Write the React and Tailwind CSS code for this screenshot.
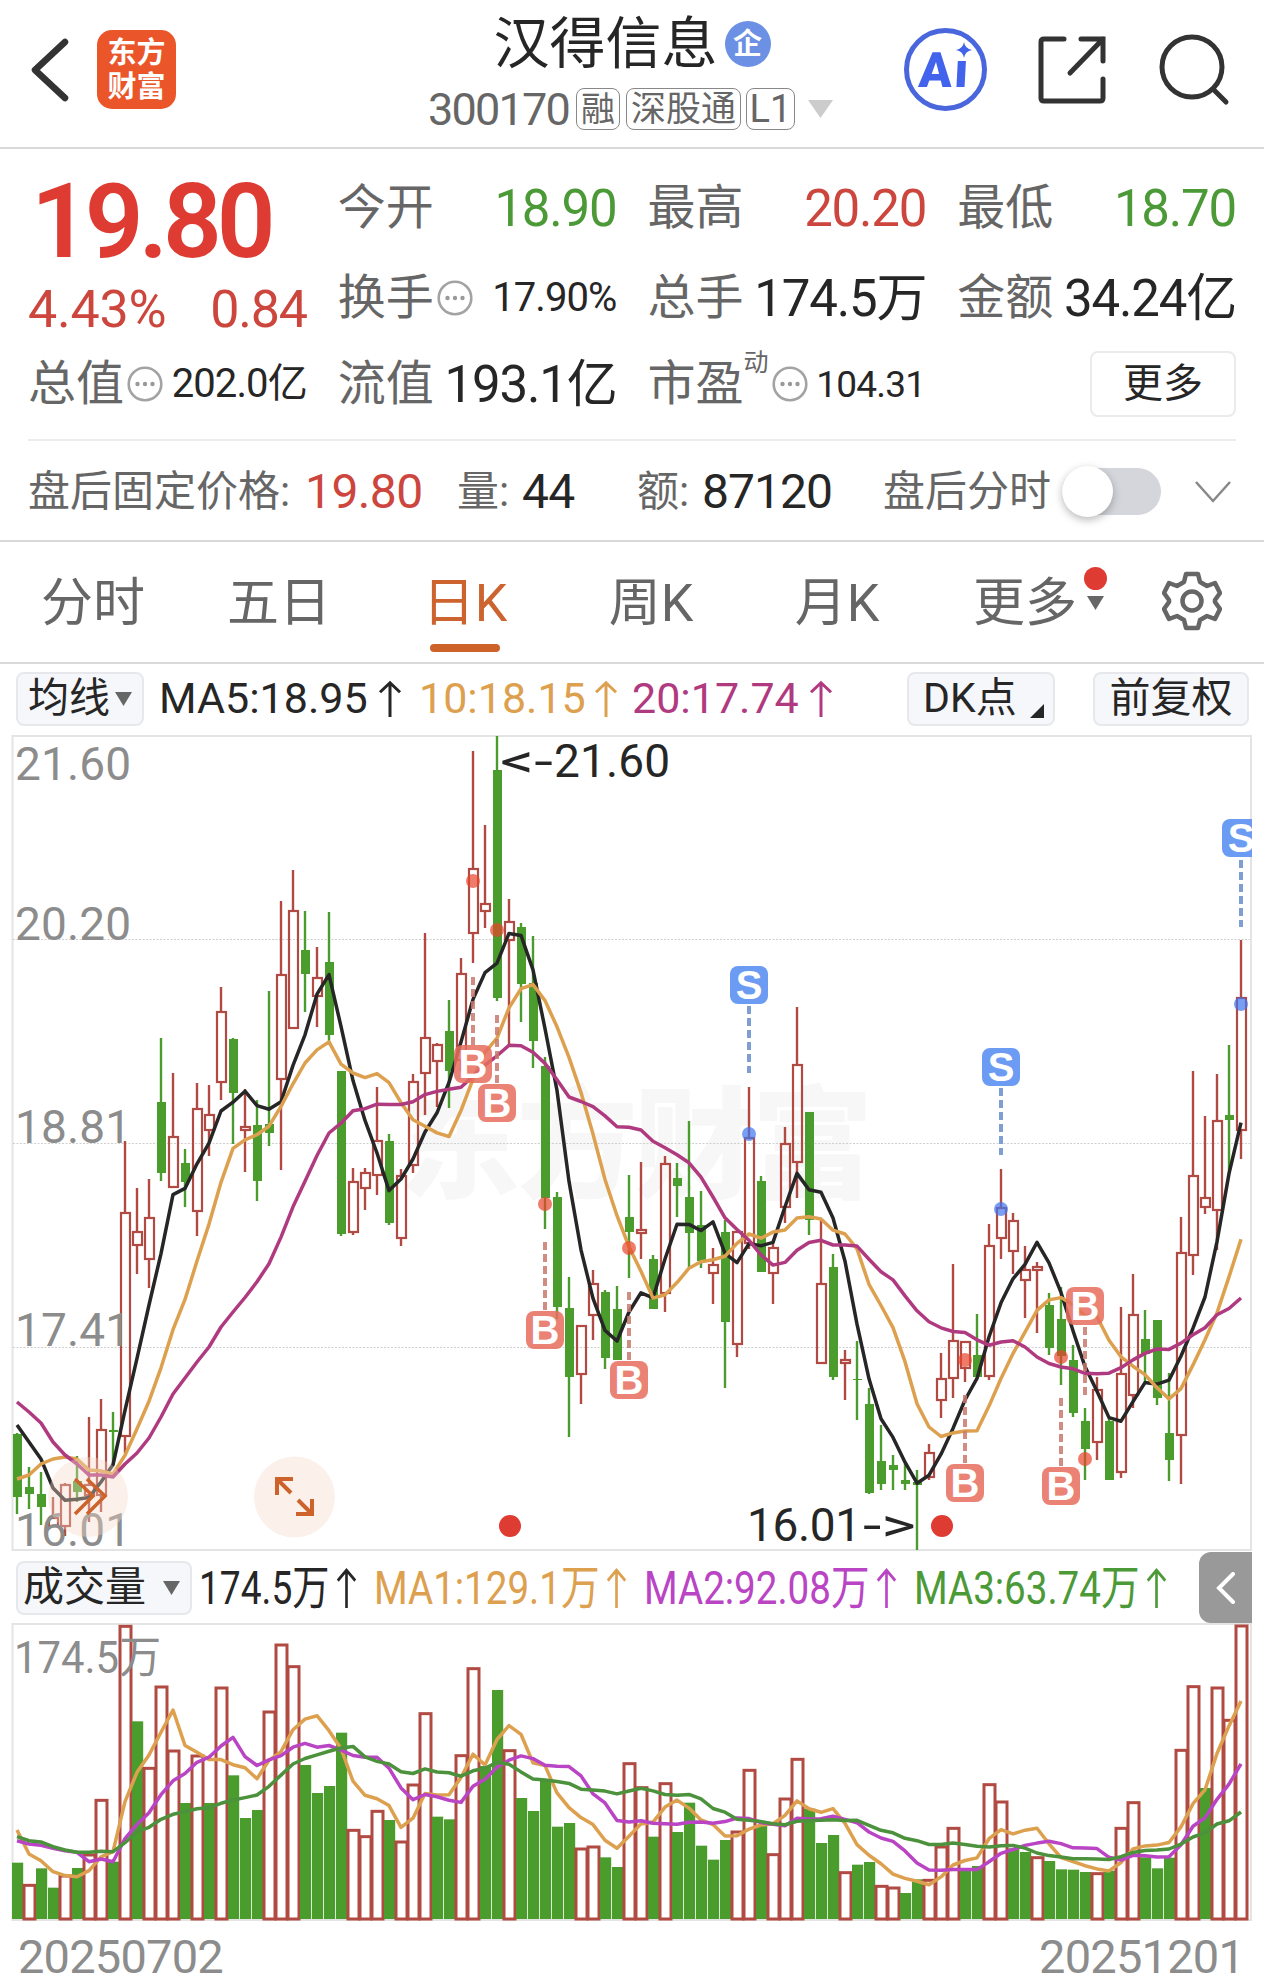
import React from 'react';

// [high, body top, body bottom, low, close above open, volume top]
const CANDLES = [
  [1433, 1434, 1497, 1514, 0, 968],
  [1467, 1487, 1494, 1509, 0, 1033],
  [1472, 1494, 1507, 1525, 0, 985],
  [1497, 1518, 1526, 1526, 1, 1043],
  [1483, 1485, 1526, 1536, 1, 1005],
  [1456, 1481, 1492, 1502, 0, 984],
  [1417, 1485, 1495, 1522, 1, 942],
  [1399, 1430, 1495, 1512, 1, 778],
  [1412, 1430, 1432, 1465, 0, 965],
  [1141, 1213, 1436, 1453, 1, 256],
  [1188, 1232, 1245, 1274, 1, 544],
  [1179, 1218, 1259, 1288, 1, 682],
  [1038, 1102, 1173, 1181, 0, 438],
  [1073, 1137, 1187, 1187, 1, 630],
  [1149, 1163, 1182, 1207, 0, 789],
  [1083, 1109, 1211, 1236, 1, 645],
  [1085, 1115, 1130, 1156, 1, 789],
  [987, 1012, 1082, 1100, 1, 441],
  [1038, 1039, 1093, 1144, 0, 706],
  [1089, 1127, 1130, 1172, 1, 834],
  [1100, 1125, 1181, 1201, 0, 810],
  [991, 1124, 1133, 1146, 0, 513],
  [901, 975, 1079, 1170, 1, 312],
  [870, 911, 1028, 1028, 1, 377],
  [911, 950, 974, 1012, 0, 675],
  [947, 978, 996, 1027, 1, 759],
  [912, 962, 1035, 1042, 0, 738],
  [1071, 1071, 1234, 1236, 0, 578],
  [1168, 1182, 1232, 1235, 1, 868],
  [1168, 1173, 1188, 1210, 1, 887],
  [1087, 1141, 1175, 1195, 1, 811],
  [1134, 1141, 1223, 1225, 0, 840],
  [1169, 1176, 1238, 1246, 1, 903],
  [1074, 1082, 1165, 1173, 1, 732],
  [933, 1038, 1073, 1115, 1, 518],
  [1043, 1045, 1061, 1107, 1, 830],
  [1000, 1031, 1071, 1108, 0, 838],
  [958, 974, 1060, 1071, 1, 644],
  [751, 869, 933, 963, 1, 383],
  [825, 904, 911, 928, 1, 678],
  [736, 770, 998, 1001, 0, 450],
  [899, 922, 940, 1045, 1, 629],
  [923, 927, 984, 1022, 0, 774],
  [936, 983, 1041, 1068, 0, 813],
  [1057, 1066, 1198, 1229, 0, 718],
  [1192, 1197, 1307, 1319, 0, 860],
  [1277, 1308, 1377, 1437, 0, 849],
  [1326, 1326, 1374, 1404, 1, 924],
  [1270, 1284, 1315, 1340, 1, 918],
  [1290, 1292, 1358, 1369, 0, 952],
  [1286, 1309, 1360, 1360, 0, 981],
  [1175, 1217, 1232, 1278, 0, 668],
  [1162, 1230, 1233, 1259, 1, 740],
  [1255, 1259, 1309, 1309, 0, 890],
  [1156, 1164, 1293, 1312, 1, 728],
  [1163, 1178, 1186, 1217, 0, 876],
  [1121, 1197, 1233, 1267, 0, 788],
  [1191, 1225, 1261, 1268, 0, 917],
  [1248, 1265, 1273, 1304, 1, 959],
  [1220, 1232, 1322, 1388, 0, 900],
  [1232, 1232, 1344, 1357, 1, 873],
  [1087, 1138, 1243, 1249, 1, 688],
  [1176, 1181, 1272, 1272, 0, 855],
  [1242, 1248, 1273, 1304, 1, 941],
  [1127, 1144, 1207, 1223, 1, 774],
  [1007, 1065, 1162, 1198, 1, 655],
  [1112, 1112, 1220, 1235, 0, 806],
  [1220, 1284, 1363, 1363, 1, 909],
  [1254, 1267, 1377, 1380, 0, 885],
  [1350, 1360, 1363, 1400, 1, 995],
  [1341, 1379, 1380, 1420, 0, 974],
  [1388, 1404, 1493, 1494, 0, 966],
  [1425, 1461, 1484, 1490, 0, 1036],
  [1455, 1465, 1470, 1490, 0, 1041],
  [1462, 1480, 1484, 1490, 0, 1059],
  [1470, 1482, 1485, 1550, 0, 1018],
  [1444, 1453, 1477, 1480, 1, 1018],
  [1353, 1379, 1400, 1418, 1, 918],
  [1264, 1341, 1378, 1398, 1, 862],
  [1342, 1342, 1368, 1382, 1, 992],
  [1314, 1355, 1377, 1377, 0, 978],
  [1224, 1246, 1376, 1380, 1, 731],
  [1169, 1208, 1238, 1259, 1, 783],
  [1213, 1221, 1251, 1274, 1, 925],
  [1246, 1270, 1280, 1318, 1, 936],
  [1262, 1267, 1270, 1333, 1, 950],
  [1293, 1305, 1348, 1355, 0, 963],
  [1287, 1319, 1356, 1385, 0, 988],
  [1345, 1360, 1413, 1417, 0, 989],
  [1408, 1421, 1449, 1480, 0, 996],
  [1377, 1390, 1442, 1460, 1, 998],
  [1417, 1421, 1480, 1480, 0, 992],
  [1307, 1374, 1472, 1478, 1, 862],
  [1274, 1315, 1395, 1408, 1, 785],
  [1310, 1339, 1354, 1383, 0, 952],
  [1320, 1320, 1398, 1405, 0, 985],
  [1373, 1433, 1460, 1481, 0, 953],
  [1217, 1253, 1435, 1484, 1, 628],
  [1071, 1176, 1255, 1275, 1, 437],
  [1116, 1198, 1207, 1214, 1, 744],
  [1074, 1121, 1210, 1250, 1, 441],
  [1045, 1115, 1120, 1174, 0, 538],
  [940, 998, 1130, 1159, 1, 255],
];

// Averages for the days before the window is full
const LEAD = {
  ma5: [1425, 1442, 1459, 1488],
  ma10: [1479, 1475, 1464, 1459, 1457, 1459, 1470, 1471, 1474],
  ma20: [1402, 1412, 1423, 1442, 1455, 1464, 1475, 1475, 1477, 1464, 1453, 1438, 1417, 1394, 1378, 1362, 1347, 1327, 1312],
  vol5: [870, 942, 962, 995],
  vol10: [902, 912, 916, 925, 932, 937, 965, 957, 965],
  vol20: [890, 902, 906, 920, 930, 937, 937, 934, 935, 908, 875, 862, 838, 823, 815, 806, 803, 790, 780],
};

const SIGNALS = [
  { type: 'B', day: 38, box: 1064, dot: 881, from: 977, to: 1045 },
  { type: 'B', day: 40, box: 1103, dot: 930, from: 1015, to: 1083 },
  { type: 'B', day: 44, box: 1330, dot: 1204, from: 1242, to: 1310 },
  { type: 'B', day: 51, box: 1380, dot: 1248, from: 1292, to: 1360 },
  { type: 'S', day: 61, box: 985, dot: 1134, from: 1006, to: 1073 },
  { type: 'B', day: 79, box: 1483, dot: 1360, from: 1395, to: 1463 },
  { type: 'S', day: 82, box: 1067, dot: 1209, from: 1088, to: 1155 },
  { type: 'B', day: 87, box: 1486, dot: 1357, from: 1398, to: 1466 },
  { type: 'B', day: 89, box: 1306, dot: 1459, from: 1327, to: 1395 },
  { type: 'S', day: 102, box: 838, dot: 1004, from: 860, to: 927 },
];

const RED = '#b04a42';
const GREEN = '#4a9c2d';

const xOf = (i) => 17 + i * 12;
const closes = CANDLES.map((c) => (c[4] ? c[1] : c[2]));
const volumes = CANDLES.map((c) => 1540 + c[5] / 3);

const average = (values, span, lead) =>
  values
    .map((_, i) => {
      const y = i < span - 1 ? lead[i] : values.slice(i - span + 1, i + 1).reduce((a, b) => a + b, 0) / span;
      return `${xOf(i)},${y.toFixed(1)}`;
    })
    .join(' ');

const volLead = (list) => list.map((v) => 1540 + v / 3);

const Line = ({ points, color }) => (
  <polyline points={points} fill="none" stroke={color} strokeWidth="3.500" strokeLinejoin="round" />
);

const UpArrow = ({ className }) => (
  <svg viewBox="0 0 24 40" preserveAspectRatio="none" className={className} fill="none" stroke="currentColor" strokeWidth="3">
    <path d="M12 39V3M2 13L12 3L22 13" />
  </svg>
);

const Caret = ({ className }) => (
  <svg viewBox="0 0 16 14" preserveAspectRatio="none" className={className} fill="currentColor">
    <path d="M0 0H16L8 14Z" />
  </svg>
);

const InfoDots = () => (
  <svg viewBox="0 0 36 36" className="ml-[3px] size-9 shrink-0">
    <circle cx="18" cy="18" r="16.3" fill="none" stroke="#a3a3a3" strokeWidth="2.6" />
    <circle cx="10.5" cy="18" r="2.2" fill="#999" />
    <circle cx="18" cy="18" r="2.2" fill="#999" />
    <circle cx="25.5" cy="18" r="2.2" fill="#999" />
  </svg>
);

const Header = () => (
  <header className="flex h-[149px] border-b-2 border-[#d9d9d9]">
    <div className="flex w-[428px] items-center pb-2 pl-[28px]">
      <svg viewBox="0 0 44 66" className="h-[66px] w-[44px]" fill="none" stroke="#333" strokeWidth="6.5" strokeLinecap="round">
        <path d="M37 5L7 33L37 61" strokeLinejoin="round" />
      </svg>
      <div className="ml-[25px] flex size-[79px] flex-col items-center justify-center rounded-[15px] bg-[#ea5529] text-[29px] leading-[34px] font-bold text-white">
        <span>东方</span>
        <span>财富</span>
      </div>
    </div>
    <div className="flex w-[405px] flex-col items-center">
      <div className="mt-[13px] flex h-[62px] items-center gap-[7px] pl-[3px]">
        <span className="text-[56px] leading-[62px] text-[#262626]">汉得信息</span>
        <span className="flex size-[46px] items-center justify-center rounded-full bg-[#6b90e4] text-[29px] leading-none font-bold text-white">企</span>
      </div>
      <div className="mt-[9px] flex h-[50px] w-[405px] items-center text-[#666]">
        <span className="w-[148px] text-[45px] leading-none tracking-[-1.8px]">300170</span>
        <span className="flex h-[42px] w-[44px] items-center justify-center rounded-[8px] border-[1.5px] border-[#888] text-[34px] leading-none">融</span>
        <span className="ml-[6px] flex h-[42px] w-[115px] items-center justify-center rounded-[8px] border-[1.5px] border-[#888] text-[35px] leading-none">深股通</span>
        <span className="ml-[5px] flex h-[42px] w-[49px] items-center justify-center rounded-[8px] border-[1.5px] border-[#888] text-[38px] leading-none">L1</span>
        <Caret className="ml-[13px] h-[18px] w-[25px] text-[#ccc]" />
      </div>
    </div>
    <div className="flex flex-1 items-center pb-2 pl-[71px]">
      <div className="relative flex size-[83px] items-center justify-center rounded-full border-[5px] border-[#4a66dc] text-[49px] leading-none font-black text-[#4263eb]">
        <span className="-skew-x-3 pt-[2px] pr-1">A<span className="ml-[2px]">ı</span></span>
        <svg viewBox="0 0 14 14" className="absolute top-[9px] left-[47px] size-[16px]" fill="currentColor">
          <path d="M7 0Q8 6 14 7Q8 8 7 14Q6 8 0 7Q6 6 7 0Z" />
        </svg>
      </div>
      <svg viewBox="0 0 70 70" className="ml-[50px] size-[70px]" fill="none" stroke="#333" strokeWidth="5" strokeLinecap="round">
        <path d="M27 4H7Q4 4 4 7V63Q4 66 7 66H63Q66 66 66 63V44" />
        <path d="M44 4H66V26M66 4L33 38" />
      </svg>
      <svg viewBox="0 0 72 72" className="ml-[51px] size-[72px]" fill="none" stroke="#333" strokeWidth="5">
        <circle cx="34" cy="33" r="30" />
        <path d="M55 55L68 68" strokeLinecap="round" />
      </svg>
    </div>
  </header>
);

const Cell = ({ label, value, color, dots, small }) => (
  <div className="flex h-[90px] items-center whitespace-nowrap">
    <span className="text-[48px] leading-none text-[#666]">{label}</span>
    {dots && <InfoDots />}
    <span className={`ml-auto leading-none ${small ? 'text-[40px] tracking-[-0.9px]' : 'text-[51px] tracking-[-1.2px]'} ${color || 'text-[#262626]'}`}>
      {value}
    </span>
  </div>
);

const Quote = () => (
  <section className="mx-7 h-[292px] border-b-2 border-[#ececec] pt-[14px]">
    <div className="grid h-[179px] grid-cols-4 gap-x-[31px]">
      <div className="flex flex-col text-[#de3b33]">
        <span className="h-[114px] pl-[3px] text-[103px] leading-[118px] font-semibold tracking-[-5px]">19.80</span>
        <div className="flex h-[66px] items-center justify-between text-[52px] leading-none text-[#cc463e]">
          <span className="tracking-[-0.2px]">4.43%</span>
          <span className="tracking-[-1.2px]">0.84</span>
        </div>
      </div>
      <div>
        <Cell label="今开" value="18.90" color="text-[#4c9a37]" />
        <Cell label="换手" value="17.90%" dots small />
      </div>
      <div>
        <Cell label="最高" value="20.20" color="text-[#cc463e]" />
        <Cell label="总手" value="174.5万" />
      </div>
      <div>
        <Cell label="最低" value="18.70" color="text-[#4c9a37]" />
        <Cell label="金额" value="34.24亿" />
      </div>
    </div>
    <div className="-mt-[3px] grid grid-cols-4 gap-x-[31px]">
      <Cell label="总值" value="202.0亿" dots small />
      <Cell label="流值" value="193.1亿" />
      <div className="flex h-[90px] items-center whitespace-nowrap text-[#666]">
        <span className="text-[48px] leading-none">市盈</span>
        <span className="mb-[44px] text-[25px] leading-none">动</span>
        <InfoDots />
        <span className="ml-auto pr-px text-[37px] leading-none tracking-[-0.8px] text-[#262626]">104.31</span>
      </div>
      <div className="flex h-[90px] items-center justify-end">
        <button className="h-[66px] w-[146px] rounded-[8px] border-2 border-[#e9ebec] text-[40px] leading-none text-[#262626]">更多</button>
      </div>
    </div>
  </section>
);

const AfterHours = () => (
  <section className="flex h-[101px] items-center border-b-2 border-[#d9d9d9] pt-[2px] pl-[28px] text-[42px] leading-none whitespace-nowrap text-[#666]">
    <span className="w-[277px]">盘后固定价格:</span>
    <span className="w-[152px] text-[48px] tracking-[-0.6px] text-[#cc463e]">19.80</span>
    <span className="w-[65px]">量:</span>
    <span className="w-[115px] text-[48px] tracking-[-0.8px] text-[#262626]">44</span>
    <span className="w-[65px]">额:</span>
    <span className="w-[181px] text-[48px] tracking-[-1px] text-[#262626]">87120</span>
    <span className="w-[179px]">盘后分时</span>
    <span className="flex h-[47px] w-[99px] items-center rounded-full bg-[#d4d6dc]">
      <span className="size-[51px] rounded-full bg-white shadow-[0_3px_8px_rgba(0,0,0,0.28)]" />
    </span>
    <svg viewBox="0 0 36 22" className="ml-[34px] h-[22px] w-[36px]" fill="none" stroke="#888" strokeWidth="2.5">
      <path d="M1 1L18 20L35 1" />
    </svg>
  </section>
);

const TABS = ['分时', '五日', '日K', '周K', '月K'];

const Tabs = () => (
  <nav className="flex h-[122px] border-b-2 border-[#d9d9d9] text-[52px] text-[#666]">
    {TABS.map((tab) => (
      <div key={tab} className={`flex w-[186px] flex-col items-center pt-[19px] leading-[86px] ${tab === '日K' ? 'text-[#cd6430]' : ''}`}>
        {tab}
        {tab === '日K' && <span className="-mt-[3px] h-[8px] w-[70px] rounded-full bg-[#cd622b]" />}
      </div>
    ))}
    <div className="flex w-[232px] pt-[19px] pl-[43px] leading-[86px]">
      更多
      <div className="ml-[6px] flex w-[24px] flex-col items-center pt-[6px]">
        <span className="size-[23px] rounded-full bg-[#de3b33]" />
        <Caret className="mt-[6px] h-[14px] w-[17px] text-[#666]" />
      </div>
    </div>
    <svg viewBox="0 0 60 60" className="mt-[29px] size-[60px]" fill="none" stroke="#666" strokeWidth="4.5" strokeLinejoin="round">
      <path d="M24 3H36L38 11L45 15L53 12L58 22L53 29V31L58 38L53 48L45 45L38 49L36 57H24L22 49L15 45L7 48L2 38L7 31V29L2 22L7 12L15 15L22 11Z" />
      <circle cx="30" cy="30" r="9.5" />
    </svg>
  </nav>
);

const Indicators = () => (
  <div className="flex h-[71px] items-center pb-[2px] pl-4 text-[43px] leading-none whitespace-nowrap">
    <button className="flex h-[54px] w-[128px] items-center justify-center gap-[5px] rounded-[8px] border-2 border-[#e6e8eb] bg-[#f6f7fa] text-[41px] text-[#262626]">
      均线
      <Caret className="h-[14px] w-[17px] text-[#666]" />
    </button>
    <span className="ml-[15px] flex w-[260px] items-center text-[#262626]">
      <span className="w-[219px]">MA5:18.95</span>
      <UpArrow className="h-[38px] w-[24px]" />
    </span>
    <span className="flex w-[213px] items-center text-[#dda04f]">
      <span className="w-[175px]">10:18.15</span>
      <UpArrow className="h-[38px] w-[24px]" />
    </span>
    <span className="flex w-[275px] items-center text-[#b03a80]">
      <span className="w-[177px]">20:17.74</span>
      <UpArrow className="h-[38px] w-[24px]" />
    </span>
    <button className="flex h-[54px] w-[148px] items-center rounded-[8px] border-2 border-[#e6e8eb] bg-[#f6f7fa] pl-[14px] text-[41px] text-[#262626]">
      DK点
      <svg viewBox="0 0 14 14" className="mt-[25px] ml-[13px] size-[14px]" fill="currentColor">
        <path d="M14 0V14H0Z" />
      </svg>
    </button>
    <button className="ml-[38px] h-[54px] w-[156px] rounded-[8px] border-2 border-[#e6e8eb] bg-[#f6f7fa] text-[41px] text-[#262626]">前复权</button>
  </div>
);

const AXIS = [
  ['21.60', 780],
  ['20.20', 940],
  ['18.81', 1143],
  ['17.41', 1346],
  ['16.01', 1546],
];

const PriceChart = () => (
  <svg viewBox="0 735 1264 817" className="block h-[817px] w-[1264px]">
    <text x="399" y="1188" fontSize="121" fontWeight="900" fill="#f7f7f7" textLength="474">东方财富</text>
    <rect x="12.5" y="736" width="1238.5" height="814" fill="none" stroke="#e4e4e4" strokeWidth="2" />
    {[939.5, 1143.5, 1347.5].map((y) => (
      <line key={y} x1="13" x2="1250" y1={y} y2={y} stroke="#cfcfcf" strokeDasharray="2 1.5" />
    ))}
    {CANDLES.map(([high, top, bottom, low, up], i) => {
      const x = xOf(i);
      return up ? (
        <g key={i} fill={RED}>
          <rect x={x - 1.2} y={high} width="2.400" height={Math.max(0, top - high)} />
          <rect x={x - 1.2} y={bottom} width="2.400" height={Math.max(0, low - bottom)} />
          <rect x={x - 4} y={top} width="9" height={bottom - top} fill="none" stroke={RED} strokeWidth="2.200" />
        </g>
      ) : (
        <g key={i} fill={GREEN}>
          <rect x={x - 1.2} y={high} width="2.400" height={low - high} />
          <rect x={x - 4} y={top} width="9" height={bottom - top} />
        </g>
      );
    })}
    <Line points={average(closes, 5, LEAD.ma5)} color="#262626" />
    <Line points={average(closes, 10, LEAD.ma10)} color="#dda04f" />
    <Line points={average(closes, 20, LEAD.ma20)} color="#b03a80" />

    {/* Buy / sell points */}
    <clipPath id="plot">
      <rect x="12" y="735" width="1240" height="816" />
    </clipPath>
    <g clipPath="url(#plot)">
      {SIGNALS.map(({ type, day, box, dot, from, to }) => {
        const x = xOf(day);
        const buy = type === 'B';
        return (
          <g key={day}>
            <line x1={x} x2={x} y1={from} y2={to} stroke={buy ? '#c9796b' : '#7d9fd2'} strokeOpacity={buy ? 0.85 : 1} strokeWidth="4" strokeDasharray="8 4" />
            <circle cx={x} cy={dot} r="7" fill={buy ? '#e8452b' : '#3f76f0'} fillOpacity="0.7" />
            <rect x={x - 19} y={box - 19} width="38" height="38" rx="8" fill={buy ? '#e66f5e' : '#6c9bf3'} fillOpacity={buy ? 0.86 : 1} />
            <text x={x} y={box + 14} textAnchor="middle" fontSize="40" fontWeight="700" fill="#fff" className="font-['Liberation_Sans']">{type}</text>
          </g>
        );
      })}
    </g>

    <g fontSize="46" fill="#8c8c8c">
      {AXIS.map(([label, y]) => (
        <text key={label} x="15" y={y} textLength="116">{label}</text>
      ))}
    </g>
    <g fontSize="46" fill="#262626">
      <text x="500" y="777" textLength="53" lengthAdjust="spacingAndGlyphs">&lt;-</text>
      <text x="554" y="777" textLength="116">21.60</text>
      <text x="747" y="1541" textLength="114">16.01</text>
      <text x="863" y="1541" textLength="53" lengthAdjust="spacingAndGlyphs">-&gt;</text>
    </g>
    <circle cx="510" cy="1526" r="11" fill="#de3b33" />
    <circle cx="942" cy="1526" r="11" fill="#de3b33" />

    {/* Floating chart controls */}
    <g fill="none" stroke="#cd622b" strokeWidth="4">
      <circle cx="88" cy="1497" r="40" fill="#f5d9c8" fillOpacity="0.38" stroke="none" />
      <path d="M75 1479L93 1496L75 1514M87 1479L105 1496L87 1514" strokeWidth="3.5" />
      <circle cx="294.500" cy="1497" r="40.500" fill="#fbf1ea" stroke="none" />
      <path d="M293 1479H277V1495M277 1479L291 1493M312 1499V1514H296M312 1514L298 1500" />
    </g>
  </svg>
);

const VolumeBar = () => (
  <div className="flex h-[71px] items-center pl-4 text-[47px] leading-none whitespace-nowrap">
    <button className="flex h-[54px] w-[176px] shrink-0 items-center gap-[17px] rounded-[8px] border-2 border-[#e6e8eb] bg-[#f6f7fa] pl-[5px] text-[41px] text-[#262626]">
      成交量
      <Caret className="h-[14px] w-[17px] text-[#666]" />
    </button>
    <span className="flex w-[182px] shrink-0 items-center pl-[7px] text-[#262626]">
      <span className="w-[137px]"><span className="inline-block origin-left scale-x-[0.79]">174.5万</span></span>
      <UpArrow className="h-[42px] w-[21px] shrink-0" />
    </span>
    <span className="flex w-[270px] shrink-0 items-center text-[#dda04f]">
      <span className="w-[232px]"><span className="inline-block origin-left scale-x-[0.82]">MA1:129.1万</span></span>
      <UpArrow className="h-[42px] w-[21px] shrink-0" />
    </span>
    <span className="flex w-[270px] shrink-0 items-center text-[#b944c4]">
      <span className="w-[232px]"><span className="inline-block origin-left scale-x-[0.82]">MA2:92.08万</span></span>
      <UpArrow className="h-[42px] w-[21px] shrink-0" />
    </span>
    <span className="flex w-[285px] shrink-0 items-center text-[#4c9a37]">
      <span className="w-[232px]"><span className="inline-block origin-left scale-x-[0.82]">MA3:63.74万</span></span>
      <UpArrow className="h-[42px] w-[21px] shrink-0" />
    </span>
    <button className="flex h-[71px] w-[53px] shrink-0 items-center justify-center rounded-l-[12px] bg-[#999]">
      <svg viewBox="0 0 20 32" className="h-[32px] w-[20px]" fill="none" stroke="#fff" strokeWidth="4" strokeLinecap="round">
        <path d="M17 2L3 16L17 30" />
      </svg>
    </button>
  </div>
);

const VolumeChart = () => (
  <svg viewBox="0 1623 1264 299" className="block h-[299px] w-[1264px]">
    <rect x="12.5" y="1624" width="1238.5" height="296" fill="none" stroke="#e4e4e4" strokeWidth="2" />
    {volumes.map((y, i) => {
      const x = xOf(i);
      // coloured against the previous close, not against the open
      const up = i > 0 && closes[i] < closes[i - 1];
      return up ? (
        <rect key={i} x={x - 5} y={y + 1} width="11" height={1918 - y} fill="#fff" stroke={RED} strokeWidth="3" />
      ) : (
        <rect key={i} x={x - 5} y={y} width="11.200" height={1919 - y} fill={GREEN} />
      );
    })}
    <Line points={average(volumes, 5, volLead(LEAD.vol5))} color="#dda04f" />
    <Line points={average(volumes, 10, volLead(LEAD.vol10))} color="#b944c4" />
    <Line points={average(volumes, 20, volLead(LEAD.vol20))} color="#4c913b" />
    <text x="14" y="1673" fontSize="44" fill="#8c8c8c" textLength="147" lengthAdjust="spacingAndGlyphs">174.5万</text>
  </svg>
);

const App = () => (
  <div className="h-[1983px] w-[1264px] overflow-hidden bg-white font-[Roboto,'Noto_Sans_CJK_SC',sans-serif]">
    <Header />
    <Quote />
    <AfterHours />
    <Tabs />
    <Indicators />
    <PriceChart />
    <VolumeBar />
    <VolumeChart />
    <div className="flex h-[61px] items-center justify-between pt-2 pr-[20px] pl-[18px] text-[47px] leading-none tracking-[-0.8px] text-[#8c8c8c]">
      <span>20250702</span>
      <span>20251201</span>
    </div>
  </div>
);

export default App;
